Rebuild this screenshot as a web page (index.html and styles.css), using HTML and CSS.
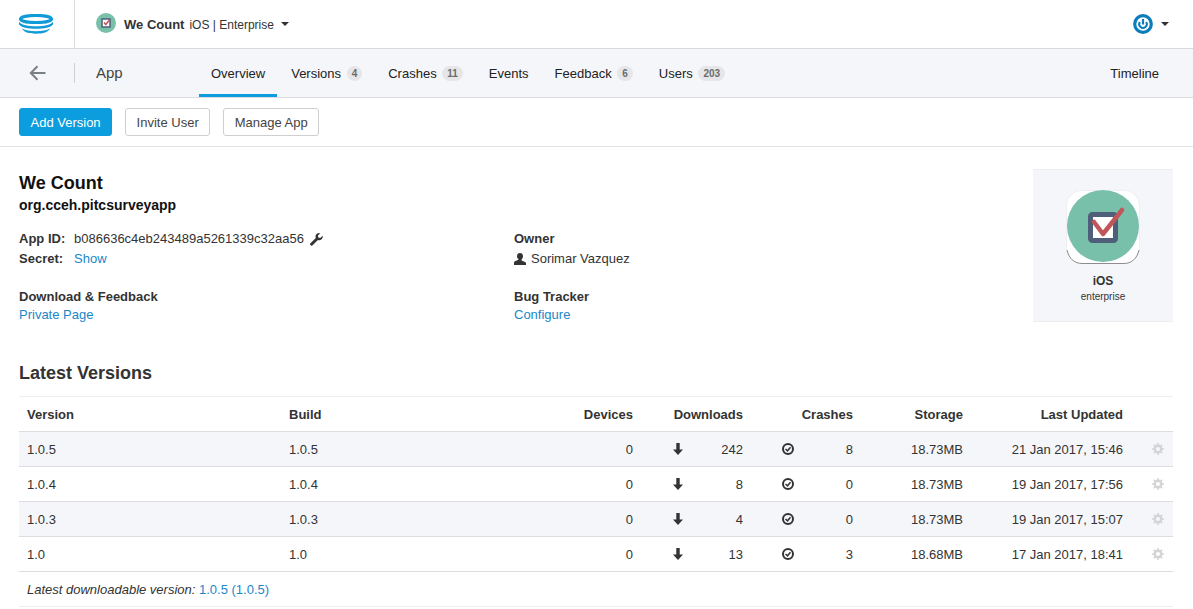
FILE: index.html
```html
<!DOCTYPE html>
<html lang="en">
<head>
    <meta charset="UTF-8">
    <meta name="viewport" content="width=device-width, initial-scale=1.0">
    <title>We Count - Overview</title>
    <link rel="stylesheet" href="styles.css">
</head>
<body>

<header class="topbar">
    <div class="logo-cell">
        <svg class="logo" width="36" height="20" viewBox="0 0 36 20">
            <ellipse cx="18" cy="5" rx="15.600" ry="3.600" fill="none" stroke="#0f9ad8" stroke-width="3"/>
            <path d="M1 8c3 3 9 4.300 17 4.300S32 11 35 8v2.500c-2.500 3-9 4.300-17 4.300S3.500 13.500 1 10.500z" fill="#0f9ad8"/>
            <path d="M4 14.500c3 1.800 8 2.700 14 2.700s11-.9 14-2.700c-1.500 3.500-7 5.200-14 5.200S5.500 18 4 14.500z" fill="#0f9ad8"/>
        </svg>
    </div>
    <div class="app-switch">
        <svg class="app-mini" width="20" height="20" viewBox="0 0 20 20">
            <circle cx="10" cy="10" r="10" fill="#79c0aa"/>
            <rect x="6" y="6" width="8" height="8" fill="#fff" stroke="#4f5f7a" stroke-width="1.500"/>
            <path d="M8 9.500l1.800 2 4-5" fill="none" stroke="#c0555a" stroke-width="1.500"/>
        </svg>
        <strong class="app-name">We Count</strong>
        <span class="app-kind">iOS | Enterprise</span>
        <span class="caret"></span>
    </div>
    <div class="user-menu">
        <svg width="20" height="20" viewBox="0 0 20 20">
            <circle cx="10" cy="10" r="8.300" fill="none" stroke="#0b7dba" stroke-width="3.200"/>
            <path d="M10 5v5.500" stroke="#0b7dba" stroke-width="2.200"/>
            <path d="M6.800 8a3.800 3.800 0 1 0 6.400 0" fill="none" stroke="#0b7dba" stroke-width="2"/>
        </svg>
        <span class="caret"></span>
    </div>
</header>

<nav class="subnav">
    <a class="back" href="#">
        <svg width="17" height="16" viewBox="0 0 17 16">
            <path d="M16.500 8H1.800M8.500 1.200L1.800 8l6.700 6.800" fill="none" stroke="#7b7f86" stroke-width="2"/>
        </svg>
    </a>
    <span class="subnav-title">App</span>
    <ul class="tabs">
        <li class="tab active">Overview</li>
        <li class="tab">Versions <span class="pill">4</span></li>
        <li class="tab">Crashes <span class="pill">11</span></li>
        <li class="tab">Events</li>
        <li class="tab">Feedback <span class="pill">6</span></li>
        <li class="tab">Users <span class="pill">203</span></li>
    </ul>
    <a class="timeline" href="#">Timeline</a>
</nav>

<div class="actions">
    <button class="btn btn-primary" type="button">Add Version</button>
    <button class="btn" type="button">Invite User</button>
    <button class="btn" type="button">Manage App</button>
</div>

<main class="content">
    <section class="summary">
        <div class="summary-info">
            <h1>We Count</h1>
            <p class="bundle">org.cceh.pitcsurveyapp</p>
            <div class="summary-cols">
                <div class="summary-col">
                    <div class="kv"><b>App ID:</b> <span>b086636c4eb243489a5261339c32aa56</span>
                        <svg class="wrench" width="13" height="13" viewBox="0 0 13 13">
                            <path d="M12.600 2.700L10.300 5 8.300 4.600 7.900 2.600 10.200.4C8.600-.2 6.900.3 6.100 1.500 5.400 2.600 5.400 3.800 5.800 4.900L.5 10.200c-.6.600-.6 1.500 0 2.100s1.500.6 2.100 0l5.300-5.300c1.200.5 2.600.3 3.700-.7 1-1 1.300-2.700 1-3.600z" fill="#333"/>
                        </svg>
                    </div>
                    <div class="kv"><b>Secret:</b> <a href="#">Show</a></div>
                    <div class="block">
                        <b>Download &amp; Feedback</b>
                        <a href="#">Private Page</a>
                    </div>
                </div>
                <div class="summary-col">
                    <div class="owner">
                        <b>Owner</b>
                        <span class="owner-name">
                            <svg width="12" height="12" viewBox="0 0 12 12">
                                <path d="M6 0c1.900 0 3 1.400 3 3.300 0 1.300-.6 2.500-1.400 3.100v1l3.400 1.500c.6.300 1 .8 1 1.400V12H0v-2.300c0-.6.400-1.100 1-1.400l3.400-1.500v-1C3.600 5.800 3 4.600 3 3.300 3 1.400 4.100 0 6 0z" fill="#333"/>
                            </svg>
                            Sorimar Vazquez
                        </span>
                    </div>
                    <div class="block">
                        <b>Bug Tracker</b>
                        <a href="#">Configure</a>
                    </div>
                </div>
            </div>
        </div>
        <aside class="app-card">
            <svg class="app-icon" width="74" height="74" viewBox="0 0 74 74">
                <rect x="0.500" y="0.500" width="73" height="73" rx="15" fill="#fff" stroke="#efeff2"/>
                <path d="M1 60c2 9 8 13.500 15 13.500h42c7 0 13-4.500 15-13.500" fill="none" stroke="#8d8d90" stroke-width="1"/>
                <circle cx="37" cy="36" r="36" fill="#79c0aa"/>
                <rect x="24.500" y="24.500" width="25" height="26" rx="2" fill="#fff" stroke="#4f5f7a" stroke-width="5"/>
                <path d="M28 32l9 12 19-24" fill="none" stroke="#c0555a" stroke-width="4.500" stroke-linecap="round" stroke-linejoin="round"/>
            </svg>
            <b class="card-os">iOS</b>
            <span class="card-kind">enterprise</span>
        </aside>
    </section>

    <h2>Latest Versions</h2>
    <table class="versions">
        <colgroup>
            <col class="c-version"><col class="c-build"><col class="c-devices"><col class="c-num"><col class="c-num"><col class="c-num"><col class="c-date"><col>
        </colgroup>
        <thead>
            <tr>
                <th>Version</th><th>Build</th><th class="num">Devices</th><th class="num">Downloads</th><th class="num">Crashes</th><th class="num">Storage</th><th class="num">Last Updated</th><th></th>
            </tr>
        </thead>
        <tbody>
            <tr>
                <td>1.0.5</td><td>1.0.5</td><td class="num">0</td>
                <td class="num with-icon"><svg class="ico-down" width="10" height="12" viewBox="0 0 10 12"><path d="M3.300 0h3.400v6.500H10L5 12 0 6.500h3.300z"/></svg>242</td>
                <td class="num with-icon"><svg class="ico-ok" width="12" height="12" viewBox="0 0 12 12"><circle cx="6" cy="6" r="5" fill="none" stroke="#333" stroke-width="2"/><path d="M3.500 6l2 1.800L8.500 4.200" fill="none" stroke="#333" stroke-width="1.500"/></svg>8</td>
                <td class="num">18.73MB</td><td class="num">21 Jan 2017, 15:46</td>
                <td class="gear"><svg width="12" height="12" viewBox="0 0 12 12"><circle cx="6" cy="6" r="3.300" fill="none" stroke="#d4d4d6" stroke-width="2.400"/><path d="M6 0v12M0 6h12M1.800 1.800l8.400 8.400M10.200 1.800l-8.400 8.400" stroke="#d4d4d6" stroke-width="1.500" stroke-dasharray="2.200 7.600 2.200"/></svg></td>
            </tr>
            <tr>
                <td>1.0.4</td><td>1.0.4</td><td class="num">0</td>
                <td class="num with-icon"><svg class="ico-down" width="10" height="12" viewBox="0 0 10 12"><path d="M3.300 0h3.400v6.500H10L5 12 0 6.500h3.300z"/></svg>8</td>
                <td class="num with-icon"><svg class="ico-ok" width="12" height="12" viewBox="0 0 12 12"><circle cx="6" cy="6" r="5" fill="none" stroke="#333" stroke-width="2"/><path d="M3.500 6l2 1.800L8.500 4.200" fill="none" stroke="#333" stroke-width="1.500"/></svg>0</td>
                <td class="num">18.73MB</td><td class="num">19 Jan 2017, 17:56</td>
                <td class="gear"><svg width="12" height="12" viewBox="0 0 12 12"><circle cx="6" cy="6" r="3.300" fill="none" stroke="#d4d4d6" stroke-width="2.400"/><path d="M6 0v12M0 6h12M1.800 1.800l8.400 8.400M10.200 1.800l-8.400 8.400" stroke="#d4d4d6" stroke-width="1.500" stroke-dasharray="2.200 7.600 2.200"/></svg></td>
            </tr>
            <tr>
                <td>1.0.3</td><td>1.0.3</td><td class="num">0</td>
                <td class="num with-icon"><svg class="ico-down" width="10" height="12" viewBox="0 0 10 12"><path d="M3.300 0h3.400v6.500H10L5 12 0 6.500h3.300z"/></svg>4</td>
                <td class="num with-icon"><svg class="ico-ok" width="12" height="12" viewBox="0 0 12 12"><circle cx="6" cy="6" r="5" fill="none" stroke="#333" stroke-width="2"/><path d="M3.500 6l2 1.800L8.500 4.200" fill="none" stroke="#333" stroke-width="1.500"/></svg>0</td>
                <td class="num">18.73MB</td><td class="num">19 Jan 2017, 15:07</td>
                <td class="gear"><svg width="12" height="12" viewBox="0 0 12 12"><circle cx="6" cy="6" r="3.300" fill="none" stroke="#d4d4d6" stroke-width="2.400"/><path d="M6 0v12M0 6h12M1.800 1.800l8.400 8.400M10.200 1.800l-8.400 8.400" stroke="#d4d4d6" stroke-width="1.500" stroke-dasharray="2.200 7.600 2.200"/></svg></td>
            </tr>
            <tr>
                <td>1.0</td><td>1.0</td><td class="num">0</td>
                <td class="num with-icon"><svg class="ico-down" width="10" height="12" viewBox="0 0 10 12"><path d="M3.300 0h3.400v6.500H10L5 12 0 6.500h3.300z"/></svg>13</td>
                <td class="num with-icon"><svg class="ico-ok" width="12" height="12" viewBox="0 0 12 12"><circle cx="6" cy="6" r="5" fill="none" stroke="#333" stroke-width="2"/><path d="M3.500 6l2 1.800L8.500 4.200" fill="none" stroke="#333" stroke-width="1.500"/></svg>3</td>
                <td class="num">18.68MB</td><td class="num">17 Jan 2017, 18:41</td>
                <td class="gear"><svg width="12" height="12" viewBox="0 0 12 12"><circle cx="6" cy="6" r="3.300" fill="none" stroke="#d4d4d6" stroke-width="2.400"/><path d="M6 0v12M0 6h12M1.800 1.800l8.400 8.400M10.200 1.800l-8.400 8.400" stroke="#d4d4d6" stroke-width="1.500" stroke-dasharray="2.200 7.600 2.200"/></svg></td>
            </tr>
        </tbody>
        <tfoot>
            <tr>
                <td colspan="8"><em>Latest downloadable version:</em> <a href="#">1.0.5 (1.0.5)</a></td>
            </tr>
        </tfoot>
    </table>
</main>

</body>
</html>
```

FILE: styles.css
```css
* { margin: 0; padding: 0; box-sizing: border-box; }
html, body { height: 609px; overflow: hidden; }
body { font-family: 'Liberation Sans', Arial, sans-serif; font-size: 13px; line-height: 20px; background: #fff; color: #333; }
a { color: #1a87c9; text-decoration: none; }

.topbar { display: flex; align-items: center; height: 49px; border-bottom: 1px solid #d8d9dc; }
.logo-cell { display: flex; align-items: center; width: 75px; height: 48px; padding-left: 18px; border-right: 1px solid #dcdcdf; }
.app-switch { display: flex; align-items: center; margin-left: 21px; }
.app-mini { margin-right: 8px; margin-bottom: 2px; }
.app-name { padding-top: 2px; color: #333; }
.app-kind { margin-left: 5px; padding-top: 2px; font-size: 12px; color: #333; }
.caret { display: inline-block; width: 0; height: 0; border: 4px solid transparent; border-top: 4px solid #333; border-bottom: 0; }
.app-switch .caret { margin-left: 7px; }
.user-menu { display: flex; align-items: center; margin-left: auto; padding-right: 24px; }
.user-menu .caret { margin-left: 8px; }

.subnav { display: flex; align-items: center; height: 49px; background: #f5f6fa; border-bottom: 1px solid #dcdde0; }
.back { display: flex; align-items: center; height: 20px; width: 75px; padding-left: 29px; border-right: 1px solid #cfd0d4; }
.subnav-title { width: 103px; margin-left: 21px; font-size: 15px; color: #444; }
.tabs { display: flex; list-style: none; height: 48px; }
.tab { display: flex; align-items: center; padding: 4px 12px 0; margin-right: 2px; color: #222; white-space: pre; border-bottom: 3px solid transparent; }
.tab.active { border-bottom-color: #0b9ddd; }
.pill { display: inline-block; min-width: 15px; margin-left: 2px; padding: 0 5px; border-radius: 8px; background: #e6e6e8; color: #6b6b6b; font-size: 10px; font-weight: bold; line-height: 15px; text-align: center; }
.timeline { margin-left: auto; padding: 2px 34px 0 0; color: #222; }

.actions { display: flex; gap: 13px; height: 49px; padding: 10px 19px 0; border-bottom: 1px solid #e3e3e6; }
.btn { height: 28px; padding: 0 10.500px; border: 1px solid #cfcfd2; border-radius: 3px; background: #fff; color: #444; font-family: inherit; font-size: 13px; }
.btn-primary { border-color: #0b9ddd; background: #0b9ddd; color: #fff; }

.content { padding: 22px 20px 0 19px; }
.summary { display: flex; justify-content: space-between; height: 153px; }
.summary-info { flex: 1; padding-top: 4px; }
h1 { font-size: 18px; line-height: 20px; color: #111; }
.bundle { margin-top: 2px; font-size: 14px; font-weight: bold; color: #111; }
.summary-cols { display: flex; margin-top: 14px; }
.summary-col { width: 495px; }
.kv { display: flex; align-items: center; height: 20px; }
.kv b { width: 55px; }
.wrench { margin-left: 6px; }
.block { display: flex; flex-direction: column; margin-top: 19px; line-height: 18px; }
.owner { display: flex; flex-direction: column; height: 40px; }
.owner-name { display: flex; align-items: center; gap: 5px; }
.owner-name svg { margin-top: -1px; }

.app-card { display: flex; flex-direction: column; align-items: center; width: 140px; height: 153px; padding-top: 20px; background: #f5f6fa; border: solid #eeeef1; border-width: 1px 0; }
.app-icon { display: block; }
.card-os { margin-top: 9px; font-size: 12px; line-height: 16px; color: #333; }
.card-kind { margin-top: 1px; font-size: 10px; line-height: 14px; color: #333; }

h2 { margin-top: 40px; font-size: 18px; line-height: 22px; color: #333; }
.versions { width: 1154px; margin-top: 12px; border-collapse: collapse; table-layout: fixed; border-top: 1px solid #ecedef; }
.c-version { width: 262px; }
.c-build { width: 200px; }
.c-devices { width: 160px; }
.c-num { width: 110px; }
.c-date { width: 160px; }
.versions th { height: 35px; padding: 2px 8px 0; text-align: left; font-weight: bold; }
.versions td { position: relative; height: 35px; padding: 2px 8px 0; }
.versions th, .versions td { border-bottom: 1px solid #dcdde0; }
.versions tbody tr:nth-child(odd) { background: #f5f6fa; }
.versions .num { text-align: right; }
.with-icon svg { position: absolute; top: 11px; }
.ico-down { left: 32px; fill: #333; }
.ico-ok { left: 31px; }
.versions td.gear { padding-top: 0; }
.gear svg { display: block; margin-left: 13px; }
.versions tfoot td { border-bottom-color: #ecedef; }
```
